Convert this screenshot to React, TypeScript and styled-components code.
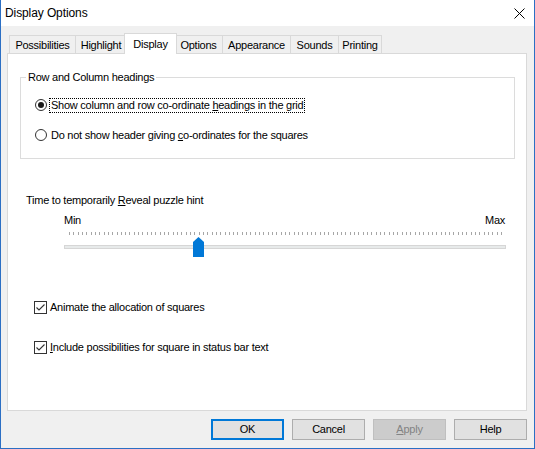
import React from "react";
import styled, { createGlobalStyle } from "styled-components";

const GlobalStyle = createGlobalStyle`
  html, body { margin: 0; padding: 0; background: #ffffff; }
  body {
    font-family: "Liberation Sans", Arial, sans-serif;
    font-size: 11px;
    letter-spacing: -0.25px;
    color: #000;
  }
  * { box-sizing: border-box; }
`;

const Window = styled.div`
  width: 535px;
  height: 449px;
  border: 1px solid #2b6fc4;
  border-top: none;
  background: #f0f0f0;
  display: flex;
  flex-direction: column;
`;

const TitleBar = styled.div`
  height: 26px;
  flex: none;
  background: #ffffff;
  display: flex;
  align-items: center;
  justify-content: space-between;
  padding: 0 9px 0 4px;
`;

const TitleText = styled.span`
  font-size: 12px;
  line-height: 14px;
  letter-spacing: -0.1px;
`;

const CloseBtn = styled.div`
  width: 11px;
  height: 11px;
  display: flex;
  margin-top: 1px;
`;

const Body = styled.div`
  flex: 1;
  display: flex;
  flex-direction: column;
  padding: 7px 7px 0 6px;
`;

const TabStrip = styled.div`
  display: flex;
  align-items: flex-end;
  height: 20px;
  padding-left: 2px;
  position: relative;
  z-index: 1;
`;

const Tab = styled.div<{ $w: number; $active?: boolean; $first?: boolean }>`
  width: ${(p) => p.$w}px;
  height: ${(p) => (p.$active ? 21 : 18)}px;
  margin-left: ${(p) => (p.$first ? 0 : p.$active ? -3 : -1)}px;
  margin-right: ${(p) => (p.$active ? -2 : 0)}px;
  margin-bottom: ${(p) => (p.$active ? -1 : 0)}px;
  border: 1px solid #d9d9d9;
  border-bottom: none;
  background: ${(p) => (p.$active ? "#ffffff" : "#f0f0f0")};
  position: relative;
  z-index: ${(p) => (p.$active ? 2 : 1)};
  display: flex;
  align-items: center;
  justify-content: center;
  line-height: 13px;
  padding-top: ${(p) => (p.$active ? 0 : 1)}px;
  white-space: nowrap;
`;

const Panel = styled.div`
  height: 358px;
  flex: none;
  border: 1px solid #d9d9d9;
  background: #ffffff;
  display: flex;
  flex-direction: column;
  padding: 17px 11px 0 12px;
`;

const GroupBox = styled.fieldset`
  margin: 0;
  padding: 0;
  min-width: 0;
  border: 1px solid #dcdcdc;
`;

const GroupLegend = styled.legend`
  margin-left: 5px;
  padding: 0 2px;
  line-height: 13px;
`;

const RadioList = styled.div`
  display: flex;
  flex-direction: column;
  gap: 14px;
  padding: 13px 0 15px 14px;
`;

const OptionRow = styled.div<{ $gap: number }>`
  display: flex;
  align-items: center;
  height: 16px;
  gap: ${(p) => p.$gap}px;
`;

const RadioCircle = styled.span<{ $checked?: boolean }>`
  width: 12px;
  height: 12px;
  flex: none;
  border: 1px solid #333333;
  border-radius: 50%;
  background: #ffffff;
  display: flex;
  align-items: center;
  justify-content: center;
  &::after {
    content: "";
    display: ${(p) => (p.$checked ? "block" : "none")};
    width: 6px;
    height: 6px;
    border-radius: 50%;
    background: #1a1a1a;
  }
`;

const OptionLabel = styled.span<{ $focused?: boolean }>`
  line-height: 13px;
  padding: 0 1px;
  border: 1px dotted ${(p) => (p.$focused ? "#000000" : "transparent")};
  white-space: nowrap;
`;

const Key = styled.span`
  text-decoration: underline;
  text-underline-offset: 1px;
`;

const SliderCaption = styled.div`
  margin: 35px 0 0 6px;
  line-height: 13px;
`;

const SliderArea = styled.div`
  margin: 7px 0 0 44px;
  width: 442px;
  display: flex;
  flex-direction: column;
`;

const SliderLabels = styled.div`
  display: flex;
  justify-content: space-between;
  line-height: 13px;
  padding-right: 1px;
`;

const TrackArea = styled.div`
  position: relative;
  height: 30px;
`;

const Ticks = styled.svg`
  position: absolute;
  left: 0;
  top: 5px;
`;

const Track = styled.div`
  position: absolute;
  left: 0;
  top: 18px;
  width: 442px;
  height: 4px;
  background: #e7eaea;
  border: 1px solid #d6d6d6;
`;

const Thumb = styled.svg`
  position: absolute;
  top: 10px;
`;

const CheckList = styled.div`
  display: flex;
  flex-direction: column;
  gap: 24px;
  margin: 42px 0 0 14px;
`;

const CheckBox = styled.span`
  width: 13px;
  height: 13px;
  flex: none;
  border: 1px solid #333333;
  background: #ffffff;
  display: flex;
  align-items: center;
  justify-content: center;
`;

const ButtonRow = styled.div`
  display: flex;
  justify-content: flex-end;
  gap: 8px;
  margin-top: 8px;
`;

const Button = styled.div<{ $default?: boolean; $disabled?: boolean }>`
  width: 73px;
  height: 21px;
  display: flex;
  align-items: center;
  justify-content: center;
  background: ${(p) => (p.$disabled ? "#cccccc" : "#e1e1e1")};
  border: ${(p) =>
    p.$default ? "2px solid #0078d7" : p.$disabled ? "1px solid #bfbfbf" : "1px solid #adadad"};
  color: ${(p) => (p.$disabled ? "#838383" : "#000000")};
  line-height: 13px;
`;

const tabs = [
  { label: "Possibilities", w: 67 },
  { label: "Highlight", w: 52 },
  { label: "Display", w: 53, active: true },
  { label: "Options", w: 49 },
  { label: "Appearance", w: 69 },
  { label: "Sounds", w: 49 },
  { label: "Printing", w: 44 },
];

const TICK_START = 5;
const TICK_STEP = 4.32;
const VALUE = 30;

const CheckMark = () => (
  <svg width="11" height="11" viewBox="0 0 11 11">
    <path d="M1.5 5.5 L4 8 L9.5 2.5" fill="none" stroke="#333" strokeWidth="1.1" />
  </svg>
);

export default function App() {
  const ticks = Array.from({ length: 101 }, (_, i) => Math.round(TICK_START + i * TICK_STEP));
  const thumbLeft = Math.round(TICK_START + VALUE * TICK_STEP - 5.5);
  return (
    <>
      <GlobalStyle />
      <Window>
        <TitleBar>
          <TitleText>Display Options</TitleText>
          <CloseBtn>
            <svg width="11" height="11" viewBox="0 0 11 11">
              <path d="M0.5 0.5 L10.5 10.5 M10.5 0.5 L0.5 10.5" stroke="#000" strokeWidth="1" />
            </svg>
          </CloseBtn>
        </TitleBar>
        <Body>
          <TabStrip>
            {tabs.map((t, i) => (
              <Tab key={t.label} $w={t.w} $active={t.active} $first={i === 0}>
                {t.label}
              </Tab>
            ))}
          </TabStrip>
          <Panel>
            <GroupBox>
              <GroupLegend>Row and Column headings</GroupLegend>
              <RadioList>
                <OptionRow $gap={2}>
                  <RadioCircle $checked />
                  <OptionLabel $focused>
                    Show column and row co-ordinate <Key>h</Key>eadings in the grid
                  </OptionLabel>
                </OptionRow>
                <OptionRow $gap={2}>
                  <RadioCircle />
                  <OptionLabel>
                    Do not show header giving <Key>c</Key>o-ordinates for the squares
                  </OptionLabel>
                </OptionRow>
              </RadioList>
            </GroupBox>
            <SliderCaption>
              Time to temporarily <Key>R</Key>eveal puzzle hint
            </SliderCaption>
            <SliderArea>
              <SliderLabels>
                <span>Min</span>
                <span>Max</span>
              </SliderLabels>
              <TrackArea>
                <Ticks width="442" height="3" viewBox="0 0 442 3">
                  {ticks.map((x, i) => (
                    <rect key={i} x={x} y={0} width={1} height={3} fill="#a6a6a6" />
                  ))}
                </Ticks>
                <Track />
                <Thumb width="11" height="20" viewBox="0 0 11 20" style={{ left: thumbLeft }}>
                  <path d="M0 5 L5.5 0 L11 5 L11 20 L0 20 Z" fill="#0078d7" />
                </Thumb>
              </TrackArea>
            </SliderArea>
            <CheckList>
              <OptionRow $gap={1}>
                <CheckBox>
                  <CheckMark />
                </CheckBox>
                <OptionLabel>Animate the allocation of squares</OptionLabel>
              </OptionRow>
              <OptionRow $gap={1}>
                <CheckBox>
                  <CheckMark />
                </CheckBox>
                <OptionLabel>
                  <Key>I</Key>nclude possibilities for square in status bar text
                </OptionLabel>
              </OptionRow>
            </CheckList>
          </Panel>
          <ButtonRow>
            <Button $default>OK</Button>
            <Button>Cancel</Button>
            <Button $disabled>
              <span>
                <Key>A</Key>pply
              </span>
            </Button>
            <Button>Help</Button>
          </ButtonRow>
        </Body>
      </Window>
    </>
  );
}
